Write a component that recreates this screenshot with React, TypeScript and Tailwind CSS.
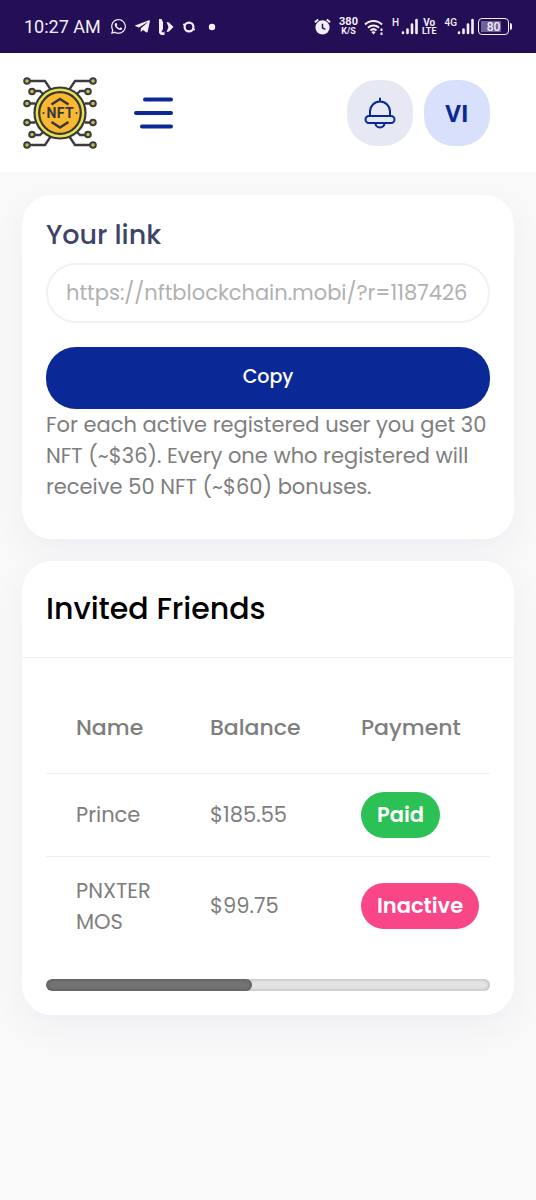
import React from "react";
import { FaWhatsapp, FaTelegramPlane } from "react-icons/fa";

function StatusBar() {
  return (
    <div className="flex h-[53px] items-center justify-between bg-[#240e56] px-6 font-['Roboto',sans-serif] text-[#f3effa]">
      <div className="flex items-center gap-[7px]">
        <span className="mr-0.5 text-lg">10:27 AM</span>
        <FaWhatsapp className="size-[17px]" />
        <FaTelegramPlane className="size-[17px]" />
        <svg viewBox="0 0 16 18" className="h-[18px] w-4" fill="currentColor" aria-hidden="true">
          <path d="M1 1h2.500l1.500 3v7l-1.500 3 2 .5 1-1.500v4H3l-2-2z" />
          <path d="M8.500 4l2.500.5 4.500 4.500-4.500 4.500-2.500.5 2-5z" />
        </svg>
        <svg viewBox="0 0 16 16" className="size-4" fill="none" stroke="currentColor" strokeWidth="2.200" aria-hidden="true">
          <circle cx="8" cy="8" r="4.400" />
          <path d="M2 5.500h3M11 10.500h3" strokeWidth="1.400" />
        </svg>
        <svg viewBox="0 0 8 8" className="ml-1 size-2" fill="currentColor" aria-hidden="true">
          <circle cx="4" cy="4" r="3.200" />
        </svg>
      </div>
      <div className="flex items-center gap-1">
        <svg viewBox="0 0 18 18" className="size-[17px]" aria-hidden="true">
          <circle cx="9" cy="10" r="7.500" fill="currentColor" />
          <path d="M1 4.500L4.500 1.500M17 4.500L13.500 1.500" stroke="currentColor" strokeWidth="2" />
          <path d="M9 6v4.500l3 1.500" stroke="#240e56" strokeWidth="1.600" fill="none" />
        </svg>
        <span className="ml-1 flex flex-col items-center font-bold">
          <span className="text-[11px] leading-[10px]">380</span>
          <span className="text-[9px] leading-[9px]">K/S</span>
        </span>
        <svg viewBox="0 0 20 18" className="ml-0.5 h-[18px] w-5" fill="none" stroke="currentColor" strokeWidth="2" aria-hidden="true">
          <path d="M1 6.500a12 12 0 0 1 17 0M4 9.700a8 8 0 0 1 11 0M6.500 12.500a4.500 4.500 0 0 1 6 0" />
          <path d="M9.500 16.500l-2-2.300a3 3 0 0 1 4 0z" fill="currentColor" stroke="none" />
          <path d="M17.500 10.500v2.500M17.500 14.500v2.500" />
        </svg>
        <Signal label="H" />
        <span className="flex flex-col items-center font-bold">
          <span className="text-[10px] leading-[9px]">Vo</span>
          <span className="text-[9px] leading-[9px]">LTE</span>
        </span>
        <Signal label="4G" />
        <span className="flex items-center">
          <span className="flex h-[17px] w-[31px] rounded border border-current p-[2px]">
            <span className="flex w-full items-center justify-center bg-linear-to-r from-[#6f6298] from-80% to-transparent to-80% text-[12px] leading-none font-medium">
              80
            </span>
          </span>
          <span className="ml-px h-[7px] w-[2px] rounded-r bg-current" />
        </span>
      </div>
    </div>
  );
}

function Signal({ label }: { label: string }) {
  return (
    <span className="ml-1 flex items-start">
      <span className="min-w-[9px] text-[10px] leading-[9px] font-medium">{label}</span>
      <svg viewBox="0 0 17 17" className="h-[17px] w-[17px]" stroke="currentColor" strokeWidth="2.600" strokeLinecap="round" aria-hidden="true">
        <path d="M2 14.500v.5M6.500 11.500v3.500M11 6.500v8.500M15.500 2v13" />
      </svg>
    </span>
  );
}

function Logo() {
  const arm = (
    <>
      <path d="M5 5H22L28 14M10 15H17L23 21M5 27.500H12" stroke="#3c3c40" strokeWidth="2.300" fill="none" />
      <g fill="#c9bf45" stroke="#3c3c40" strokeWidth="2">
        <circle cx="4" cy="5" r="2.800" />
        <circle cx="9" cy="15.500" r="2.800" />
        <circle cx="4" cy="27.500" r="2.800" />
      </g>
    </>
  );
  return (
    <svg viewBox="0 0 74 74" className="size-[74px]" role="img" aria-label="NFT">
      <g>{arm}</g>
      <g transform="translate(74 0) scale(-1 1)">{arm}</g>
      <g transform="translate(0 74) scale(1 -1)">{arm}</g>
      <g transform="translate(74 74) scale(-1 -1)">{arm}</g>
      <circle cx="37" cy="37" r="25.500" fill="#e6e24c" stroke="#38383c" strokeWidth="2.200" />
      <circle cx="37" cy="37" r="20.800" fill="#fab831" stroke="#38383c" strokeWidth="2.200" />
      <path d="M28.500 28.500l8.500-5.500 8.500 5.500M28.500 46l8.500 5.500 8.500-5.500" fill="none" stroke="#38383c" strokeWidth="2.600" />
      <text x="28.500 37.700 46.300" y="42" textAnchor="middle" fontSize="14" fontWeight="700" fontFamily="Roboto, sans-serif" fill="#38383c">
        NFT
      </text>
      <circle cx="20.500" cy="37" r="1" fill="#38383c" />
      <circle cx="53.500" cy="37" r="1" fill="#38383c" />
    </svg>
  );
}

function Header() {
  return (
    <header className="flex h-[119px] items-center bg-white pr-[46px] pl-[23px]">
      <a href="#home">
        <Logo />
      </a>
      <button type="button" aria-label="Menu" className="ml-9 text-[#0b2897]">
        <svg viewBox="0 0 42 34" className="h-[34px] w-[42px]" stroke="currentColor" strokeWidth="4" strokeLinecap="round" aria-hidden="true">
          <path d="M12 3.500H38M3 17H38M9 30.500H38" />
        </svg>
      </button>
      <div className="ml-auto flex gap-[11px]">
        <button type="button" aria-label="Notifications" className="flex size-[66px] items-center justify-center rounded-[30px] bg-[#e6e9f4] text-[#0b2897]">
          <svg viewBox="0 0 32 32" className="size-8" fill="none" stroke="currentColor" strokeWidth="2" strokeLinecap="round" aria-hidden="true">
            <path d="M16 1.500V4.500M6 19V14.500A10 10 0 0 1 26 14.500V19" />
            <rect x="1.500" y="19" width="29" height="7" rx="3.500" />
            <path d="M11.500 26.500a4.500 4 0 0 0 9 0" />
          </svg>
        </button>
        <button type="button" className="size-[66px] rounded-[30px] bg-[#d9e0fb] font-['Open_Sans',sans-serif] text-2xl font-bold text-[#0b2897]">
          VI
        </button>
      </div>
    </header>
  );
}

const friends = [
  { name: "Prince", balance: "$185.55", payment: "Paid", color: "bg-[#2bc155]" },
  { name: "PNXTER MOS", balance: "$99.75", payment: "Inactive", color: "bg-[#f94687]" },
];

export default function App() {
  return (
    <div className="min-h-screen bg-[#f9f9f9] font-['Poppins','Inter',sans-serif] text-[#7e7e7e]">
      <StatusBar />
      <Header />
      <main className="flex flex-col gap-[22px] px-[22px] py-[23px]">
        <section className="rounded-[30px] bg-white px-6 pt-6 pb-[37px] shadow-[0_12px_33px_rgba(62,7,115,0.05)]">
          <label htmlFor="link" className="block text-[27px] leading-8 font-medium text-[#3d4465]">
            Your link
          </label>
          <input
            id="link"
            readOnly
            value="https://nftblockchain.mobi/?r=1187426"
            className="mt-3 block h-[60px] w-full rounded-[30px] border-2 border-[#f0f1f5] px-[18px] pb-0.5 text-[21px] text-[#b1b1b1] outline-none"
          />
          <button type="button" className="mt-6 block h-[62px] w-full rounded-[30px] bg-[#0b2897] pb-0.5 text-[19px] font-medium text-white">
            Copy
          </button>
          <p className="text-[21px] leading-[31px]">
            For each active registered user you get 30 NFT (~$36). Every one who registered will receive 50 NFT (~$60) bonuses.
          </p>
        </section>

        <section className="rounded-[30px] bg-white shadow-[0_12px_33px_rgba(62,7,115,0.05)]">
          <h2 className="border-b border-[#eceef2] px-6 py-7 text-[30px] leading-10 font-medium text-black">Invited Friends</h2>
          <div className="p-6">
            <div className="overflow-x-auto [scrollbar-width:none]">
              <table className="mb-6 w-[957px] table-fixed text-left text-[21px] leading-[31px]">
                <colgroup>
                  <col className="w-[134px]" />
                  <col className="w-[151px]" />
                  <col />
                </colgroup>
                <thead>
                  <tr className="h-[91px] border-b border-[#eeeeee] text-[22px]">
                    <th scope="col" className="pl-[30px] font-medium">Name</th>
                    <th scope="col" className="pl-[30px] font-medium">Balance</th>
                    <th scope="col" className="pl-[30px] font-medium">Payment</th>
                  </tr>
                </thead>
                <tbody>
                  {friends.map((f) => (
                    <tr key={f.name} className="border-b border-[#eeeeee] last:border-0">
                      <td className="py-[18px] pl-[30px]">{f.name}</td>
                      <td className="py-[18px] pl-[30px]">{f.balance}</td>
                      <td className="py-[18px] pl-[30px]">
                        <span className={`inline-flex h-[46px] items-center rounded-[23px] px-4 font-semibold text-white ${f.color}`}>{f.payment}</span>
                      </td>
                    </tr>
                  ))}
                </tbody>
              </table>
            </div>
            <div className="h-3 overflow-hidden rounded-md bg-[#e4e4e4] shadow-[inset_0_0_4px_rgba(0,0,0,0.25)]" aria-hidden="true">
              <div className="h-full w-[46.5%] rounded-md bg-[#747474] shadow-[inset_0_0_4px_rgba(0,0,0,0.3)]" />
            </div>
          </div>
        </section>
      </main>
    </div>
  );
}
